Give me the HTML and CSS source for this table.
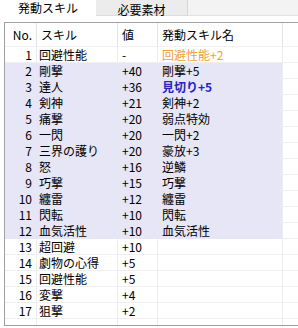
FILE: index.html
```html
<!DOCTYPE html>
<html lang="ja">
<head>
<meta charset="utf-8">
<link rel="stylesheet" href="styles.css">
</head>
<body>
<div class="tabs">
  <div class="tab active">発動スキル</div>
  <div class="tab">必要素材</div>
  <div class="tab-fill"></div>
</div>
<div class="panel">
  <div class="row head">
    <div class="c num">No.</div><div class="c">スキル</div><div class="c val">値</div><div class="c name">発動スキル名</div><div class="c"></div>
  </div>
  <div class="row"><div class="c num">1</div><div class="c">回避性能</div><div class="c val">-</div><div class="c name orange">回避性能+2</div><div class="c"></div></div>
  <div class="row hl"><div class="c num">2</div><div class="c">剛撃</div><div class="c val">+40</div><div class="c name">剛撃+5</div><div class="c"></div></div>
  <div class="row hl"><div class="c num">3</div><div class="c">達人</div><div class="c val">+36</div><div class="c name blue">見切り+5</div><div class="c"></div></div>
  <div class="row hl"><div class="c num">4</div><div class="c">剣神</div><div class="c val">+21</div><div class="c name">剣神+2</div><div class="c"></div></div>
  <div class="row hl"><div class="c num">5</div><div class="c">痛撃</div><div class="c val">+20</div><div class="c name">弱点特効</div><div class="c"></div></div>
  <div class="row hl"><div class="c num">6</div><div class="c">一閃</div><div class="c val">+20</div><div class="c name">一閃+2</div><div class="c"></div></div>
  <div class="row hl"><div class="c num">7</div><div class="c">三界の護り</div><div class="c val">+20</div><div class="c name">豪放+3</div><div class="c"></div></div>
  <div class="row hl"><div class="c num">8</div><div class="c">怒</div><div class="c val">+16</div><div class="c name">逆鱗</div><div class="c"></div></div>
  <div class="row hl"><div class="c num">9</div><div class="c">巧撃</div><div class="c val">+15</div><div class="c name">巧撃</div><div class="c"></div></div>
  <div class="row hl"><div class="c num">10</div><div class="c">纏雷</div><div class="c val">+12</div><div class="c name">纏雷</div><div class="c"></div></div>
  <div class="row hl"><div class="c num">11</div><div class="c">閃転</div><div class="c val">+10</div><div class="c name">閃転</div><div class="c"></div></div>
  <div class="row hl"><div class="c num">12</div><div class="c">血気活性</div><div class="c val">+10</div><div class="c name">血気活性</div><div class="c"></div></div>
  <div class="row"><div class="c num">13</div><div class="c">超回避</div><div class="c val">+10</div><div class="c name"></div><div class="c"></div></div>
  <div class="row"><div class="c num">14</div><div class="c">劇物の心得</div><div class="c val">+5</div><div class="c name"></div><div class="c"></div></div>
  <div class="row"><div class="c num">15</div><div class="c">回避性能</div><div class="c val">+5</div><div class="c name"></div><div class="c"></div></div>
  <div class="row"><div class="c num">16</div><div class="c">変撃</div><div class="c val">+4</div><div class="c name"></div><div class="c"></div></div>
  <div class="row"><div class="c num">17</div><div class="c">狙撃</div><div class="c val">+2</div><div class="c name"></div><div class="c"></div></div>
  <div class="row empty"><div class="c num"></div><div class="c"></div><div class="c val"></div><div class="c name"></div><div class="c"></div></div>
</div>
</body>
</html>
```

FILE: styles.css
```css
html, body {
  margin: 0;
  padding: 0;
  background: #ffffff;
  overflow: hidden;
}
body {
  width: 298px;
  height: 328px;
  font-family: "Noto Sans CJK JP", "Noto Sans", sans-serif;
  font-size: 12px;
  color: #000000;
}
.tabs {
  display: flex;
  height: 16px;
}
.tab {
  width: 92px;
  box-sizing: border-box;
  background: #ececec;
  border-right: 1px solid #d6d6d6;
  border-bottom: 1px solid #dcdcdc;
  text-align: center;
  line-height: 20px;
  height: 16px;
  overflow: visible;
}
.tab.active {
  width: 96px;
  background: #ffffff;
  border: none;
  line-height: 16px;
}
.tab-fill {
  flex: 1;
  background: #f3f3f3;
  border-bottom: 1px solid #e2e2e2;
}
.panel {
  margin-top: 6px;
  margin-left: 4px;
  width: 300px;
  height: 302px;
  border: 1px solid #a0a0a0;
  border-right: none;
  overflow: hidden;
}
.row {
  display: grid;
  grid-template-columns: 32px 81px 40px 125px 1fr;
  height: 16px;
  line-height: 15px;
}
.c {
  box-sizing: border-box;
  border-right: 1px solid #ededed;
  border-bottom: 1px solid #efefef;
  padding-left: 2px;
  white-space: nowrap;
  overflow: hidden;
}
.c.num {
  text-align: right;
  padding-left: 0;
  padding-right: 4px;
}
.c.val,
.c.name {
  padding-left: 4px;
}
.row.head {
  height: 24px;
  line-height: 23px;
}
.row.head .c {
  border-right-color: #e3e3e3;
  border-bottom-color: #f2f2f2;
}
.row.head .c:nth-child(2) {
  padding-left: 4px;
}
.row.hl .c:not(:last-child) {
  background: #e6e6f7;
  border-bottom-color: #e6e6f7;
  border-right-color: #e6e6f7;
}
.row.hl .c:nth-child(4) {
  border-right-color: #ededed;
}
.row.empty .c {
  border-bottom: none;
}
.orange {
  color: #eba23a;
}
.blue {
  color: #2424c4;
  font-weight: bold;
}
```
